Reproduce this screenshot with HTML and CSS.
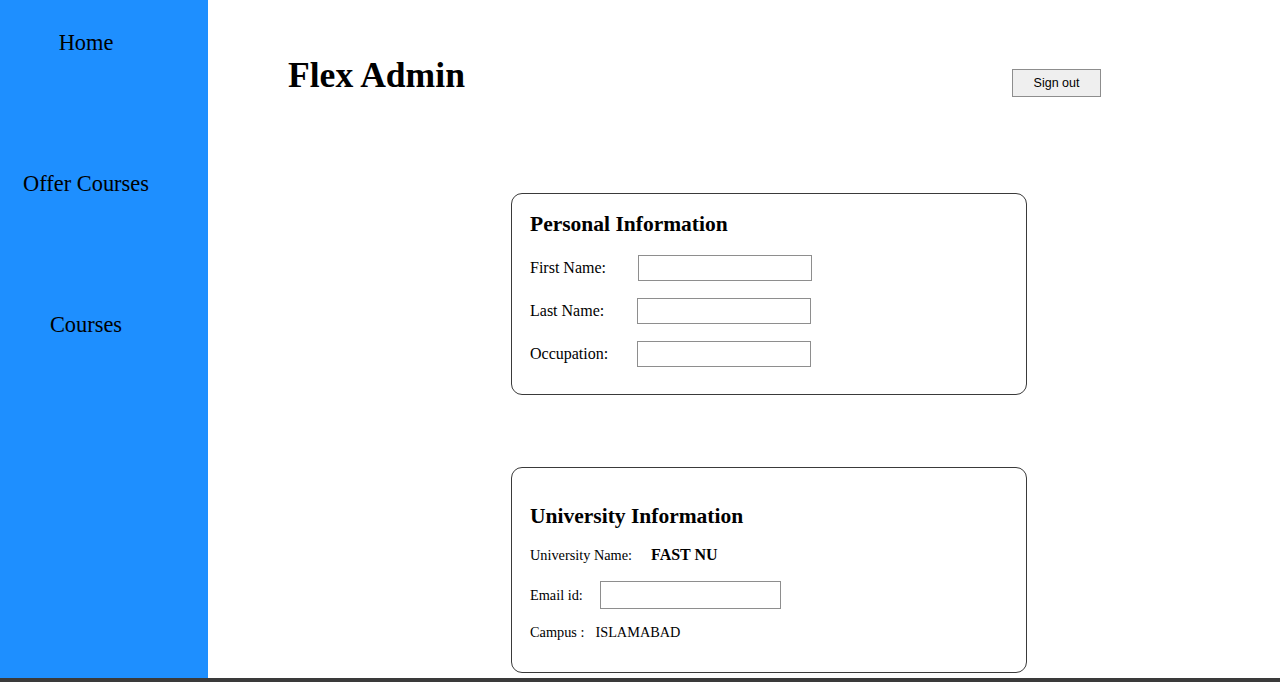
FILE: index.html
```html
<!DOCTYPE html>
<html lang="en">
<head>
<meta charset="utf-8">
<title>Flex Admin</title>
<link rel="stylesheet" href="styles.css">
</head>
<body>
<div class="page">
  <div class="layout">
    <nav class="sidebar">
      <a class="nav-item" href="#">Home</a>
      <a class="nav-item" href="#">Offer Courses</a>
      <a class="nav-item" href="#">Courses</a>
    </nav>
    <main class="main">
      <header class="topbar">
        <h1 class="title">Flex Admin</h1>
        <button class="signout" type="button">Sign out</button>
      </header>
      <section class="card card-personal">
        <h2 class="card-title">Personal Information</h2>
        <div class="form-row">
          <label class="label">First Name:</label>
          <input class="field field-first" type="text">
        </div>
        <div class="form-row">
          <label class="label">Last Name:</label>
          <input class="field" type="text">
        </div>
        <div class="form-row">
          <label class="label">Occupation:</label>
          <input class="field" type="text">
        </div>
      </section>
      <section class="card card-uni">
        <h2 class="card-title">University Information</h2>
        <div class="uni-row uni-name">
          <span class="small-label">University Name:</span>
          <strong class="uni-value">FAST NU</strong>
        </div>
        <div class="uni-row uni-email">
          <span class="small-label">Email id:</span>
          <input class="field email-field" type="text">
        </div>
        <div class="uni-row uni-campus">
          <span class="small-label">Campus :</span>
          <span class="campus-value">ISLAMABAD</span>
        </div>
      </section>
    </main>
  </div>
  <div class="bottom-strip"></div>
</div>
</body>
</html>
```

FILE: styles.css
```css
html, body {
  margin: 0;
  padding: 0;
  height: 100%;
  background: #ffffff;
  font-family: "Liberation Serif", "Times New Roman", serif;
  color: #000;
}

.page {
  height: 100vh;
  display: flex;
  flex-direction: column;
  overflow: hidden;
}

.layout {
  flex: 1;
  display: flex;
  min-height: 0;
}

.sidebar {
  width: 208px;
  flex: 0 0 208px;
  background: #1e8fff;
  display: flex;
  flex-direction: column;
  align-items: center;
  gap: 116px;
  padding: 30px 36px 0 0;
  box-sizing: border-box;
}

.nav-item {
  font-size: 22.4px;
  line-height: 25px;
  color: #000;
  text-decoration: none;
  white-space: nowrap;
}

.main {
  flex: 1;
  display: flex;
  flex-direction: column;
  min-width: 0;
}

.topbar {
  display: flex;
  align-items: flex-start;
  justify-content: space-between;
  padding: 55px 179px 0 80px;
}

.title {
  margin: 0;
  font-size: 35.6px;
  line-height: 40px;
  font-weight: bold;
}

.signout {
  margin-top: 14px;
  width: 89px;
  height: 28px;
  background: #efefef;
  border: 1px solid #8d8d8d;
  border-radius: 0;
  font-family: "Liberation Sans", Arial, sans-serif;
  font-size: 12.5px;
  color: #000;
  padding: 0;
}

.card {
  margin-left: 303px;
  width: 516px;
  box-sizing: border-box;
  border: 1px solid #3a3a3a;
  border-radius: 11px;
  padding-left: 18px;
}

.card-personal {
  margin-top: 96px;
  height: 202px;
  padding-top: 18px;
}

.card-uni {
  margin-top: 72px;
  height: 206px;
  padding-top: 36px;
}

.card-title {
  margin: 0;
  font-size: 21.5px;
  line-height: 24px;
  font-weight: bold;
}

.form-row {
  display: flex;
  align-items: center;
  margin-top: 17px;
}

.card-title + .form-row {
  margin-top: 19px;
}

.label {
  width: 107px;
  flex: 0 0 107px;
  font-size: 16px;
  line-height: 18px;
}

.field {
  width: 174px;
  height: 26px;
  box-sizing: border-box;
  border: 1px solid #8e8e8e;
  padding: 0 4px;
  margin: 0;
  background: #fff;
  font-family: "Liberation Sans", Arial, sans-serif;
}

.field-first {
  margin-left: 1px;
}

.uni-row {
  display: flex;
  align-items: center;
  font-size: 14.3px;
  line-height: 16px;
}

.uni-name {
  margin-top: 19px;
}

.uni-value {
  margin-left: 19px;
  font-size: 16px;
}

.uni-email {
  margin-top: 18px;
}

.email-field {
  width: 181px;
  height: 28px;
  margin-left: 17px;
}

.uni-campus {
  margin-top: 15px;
}

.campus-value {
  margin-left: 11px;
}

.bottom-strip {
  height: 4px;
  flex: 0 0 4px;
  background: #3a3a3a;
}
```
